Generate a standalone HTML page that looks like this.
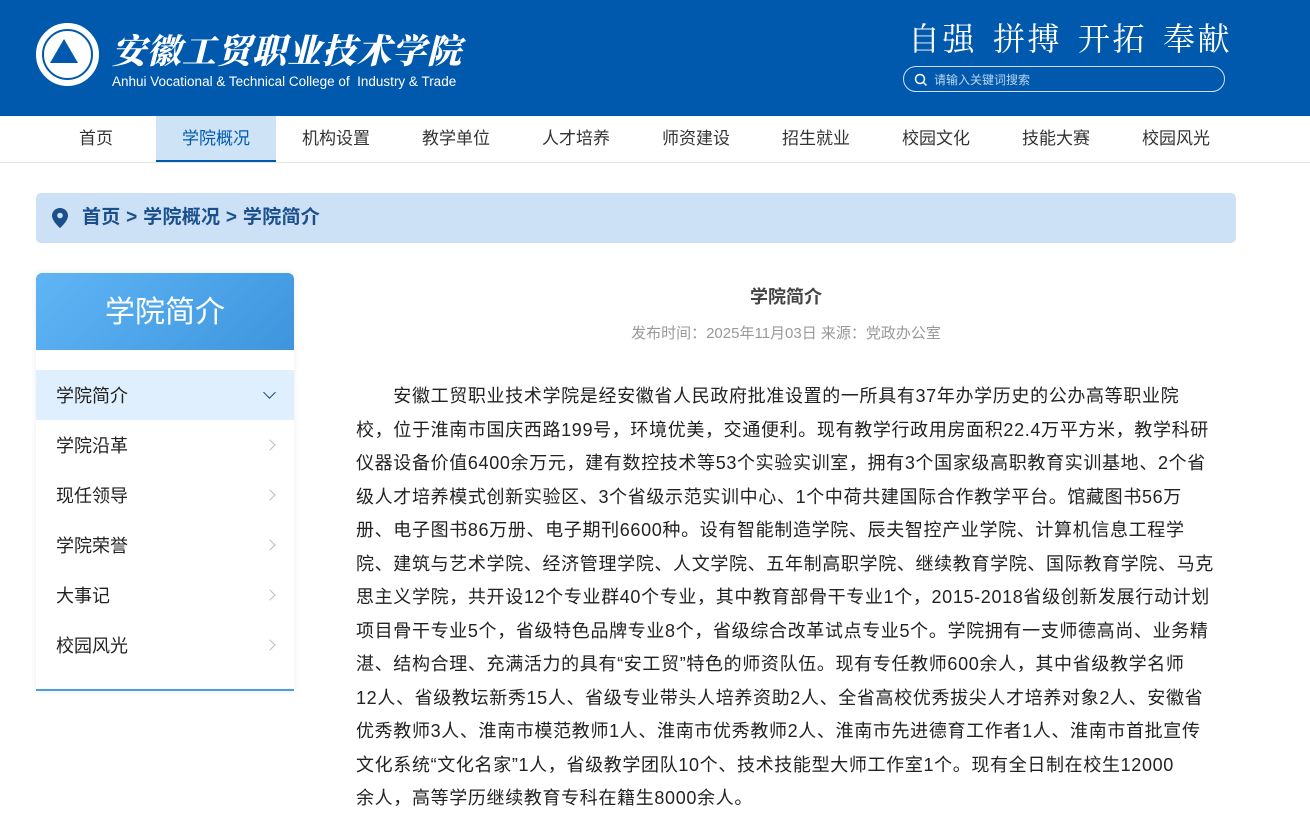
<!DOCTYPE html>
<html><head><meta charset="utf-8"><style>
*{margin:0;padding:0;box-sizing:border-box}
body{width:1310px;height:817px;overflow:hidden;background:#fff;font-family:"Liberation Sans","Noto Sans CJK SC",sans-serif;color:#333}
.hd{height:116px;background:#0059ac;position:relative;color:#fff}
.logo{position:absolute;left:36px;top:23px;width:63px;height:63px;border-radius:50%;background:#fff;border:2px solid #fff}
.logo .in{position:absolute;left:4px;top:4px;width:51px;height:51px;border-radius:50%;border:2px solid #0059ac}
.logo .tri{position:absolute;left:12px;top:14px;width:0;height:0;border-left:14px solid transparent;border-right:14px solid transparent;border-bottom:24px solid #0059ac}
.cn{position:absolute;left:112px;top:24px;font-family:"Noto Serif CJK SC",serif;font-size:34px;font-weight:900;letter-spacing:1px;font-style:italic}
.en{position:absolute;left:112px;top:74px;font-size:13.5px}
.slogan{position:absolute;left:908px;top:14px;font-family:"Noto Serif CJK SC",serif;font-size:32px;letter-spacing:2.5px;white-space:nowrap}
.slogan span{display:inline-block;width:16px}
.search{position:absolute;left:903px;top:66px;width:322px;height:26px;border:1px solid #cfe0f3;border-radius:13px;font-size:12px;color:#bcd6f0;padding:4px 0 0 30px}
.search svg{position:absolute;left:10px;top:6px}
.nav{height:47px;border-bottom:1px solid #e5e5e5;position:relative}
.nav a{position:absolute;top:0;width:120px;height:46px;line-height:46px;text-align:center;font-size:17px;color:#333;text-decoration:none}
.nav a.on{background:#cfe3f7;color:#0059ac;border-bottom:2px solid #0059ac}
.bc{position:absolute;left:36px;top:193px;width:1200px;height:50px;background:#cce0f6;border-radius:5px;font-size:19px;font-weight:bold;color:#1a4f8c;line-height:50px;padding-left:46px;letter-spacing:0.3px}
.bc svg{position:absolute;left:16px;top:15px}
.side{position:absolute;left:36px;top:273px;width:258px;height:418px;box-shadow:0 0 6px rgba(0,0,0,.08);border-bottom:2px solid #4a9ee6}
.side .t{height:77px;border-radius:6px 6px 0 0;background:linear-gradient(135deg,#5fb5f5,#3e95dd);color:#fff;font-size:30px;text-align:center;line-height:80px}
.side ul{list-style:none;margin-top:20px}
.side li{height:50px;line-height:52px;padding-left:20px;font-size:18px;color:#222;position:relative}
.side li.on{background:#dfeffd}
.side li:after{content:"";position:absolute;right:20px;top:21px;width:7px;height:7px;border-right:1px solid #bbb;border-top:1px solid #bbb;transform:rotate(45deg)}
.side li.on:after{border-color:#1a4f8c;transform:rotate(135deg);top:18px;width:8px;height:8px}
.title{position:absolute;left:356px;width:860px;top:283px;text-align:center;font-size:18px;font-weight:bold;color:#444}
.meta{position:absolute;left:356px;width:860px;top:322px;text-align:center;font-size:15px;color:#999}
.txt{position:absolute;left:356px;top:380px;font-size:18px;line-height:33.5px;color:#222;white-space:nowrap;letter-spacing:0.65px}
</style></head><body>
<div class="hd">
<div class="logo"><div class="in"></div><div class="tri"></div></div>
<div class="cn">安徽工贸职业技术学院</div>
<div class="en">Anhui Vocational &amp; Technical College of&nbsp; Industry &amp; Trade</div>
<div class="slogan">自强<span></span>拼搏<span></span>开拓<span></span>奉献</div>
<div class="search"><svg width="14" height="14" viewBox="0 0 14 14"><circle cx="6" cy="6" r="4.5" fill="none" stroke="#fff" stroke-width="1.5"/><path d="M9.5 9.5L12.5 12.5" stroke="#fff" stroke-width="1.5"/></svg>请输入关键词搜索</div>
</div>
<div class="nav">
<a style="left:36px">首页</a><a class="on" style="left:156px">学院概况</a><a style="left:276px">机构设置</a><a style="left:396px">教学单位</a><a style="left:516px">人才培养</a><a style="left:636px">师资建设</a><a style="left:756px">招生就业</a><a style="left:876px">校园文化</a><a style="left:996px">技能大赛</a><a style="left:1116px">校园风光</a>
</div>
<div class="bc"><svg width="16" height="20" viewBox="0 0 16 20"><path d="M8 0C3.6 0 0 3.4 0 7.7 0 13 8 20 8 20s8-7 8-12.3C16 3.4 12.4 0 8 0z" fill="#1a4f8c"/><circle cx="8" cy="7.5" r="2.8" fill="#cce0f6"/></svg>首页 &gt; 学院概况 &gt; 学院简介</div>
<div class="side"><div class="t">学院简介</div>
<ul><li class="on">学院简介</li><li>学院沿革</li><li>现任领导</li><li>学院荣誉</li><li>大事记</li><li>校园风光</li></ul></div>
<div class="title">学院简介</div>
<div class="meta">发布时间：2025年11月03日 来源：党政办公室</div>
<div class="txt">　　安徽工贸职业技术学院是经安徽省人民政府批准设置的一所具有37年办学历史的公办高等职业院<br>校，位于淮南市国庆西路199号，环境优美，交通便利。现有教学行政用房面积22.4万平方米，教学科研<br>仪器设备价值6400余万元，建有数控技术等53个实验实训室，拥有3个国家级高职教育实训基地、2个省<br>级人才培养模式创新实验区、3个省级示范实训中心、1个中荷共建国际合作教学平台。馆藏图书56万<br>册、电子图书86万册、电子期刊6600种。设有智能制造学院、辰夫智控产业学院、计算机信息工程学<br>院、建筑与艺术学院、经济管理学院、人文学院、五年制高职学院、继续教育学院、国际教育学院、马克<br>思主义学院，共开设12个专业群40个专业，其中教育部骨干专业1个，2015-2018省级创新发展行动计划<br>项目骨干专业5个，省级特色品牌专业8个，省级综合改革试点专业5个。学院拥有一支师德高尚、业务精<br>湛、结构合理、充满活力的具有“安工贸”特色的师资队伍。现有专任教师600余人，其中省级教学名师<br>12人、省级教坛新秀15人、省级专业带头人培养资助2人、全省高校优秀拔尖人才培养对象2人、安徽省<br>优秀教师3人、淮南市模范教师1人、淮南市优秀教师2人、淮南市先进德育工作者1人、淮南市首批宣传<br>文化系统“文化名家”1人，省级教学团队10个、技术技能型大师工作室1个。现有全日制在校生12000<br>余人，高等学历继续教育专科在籍生8000余人。</div>
</body></html>
